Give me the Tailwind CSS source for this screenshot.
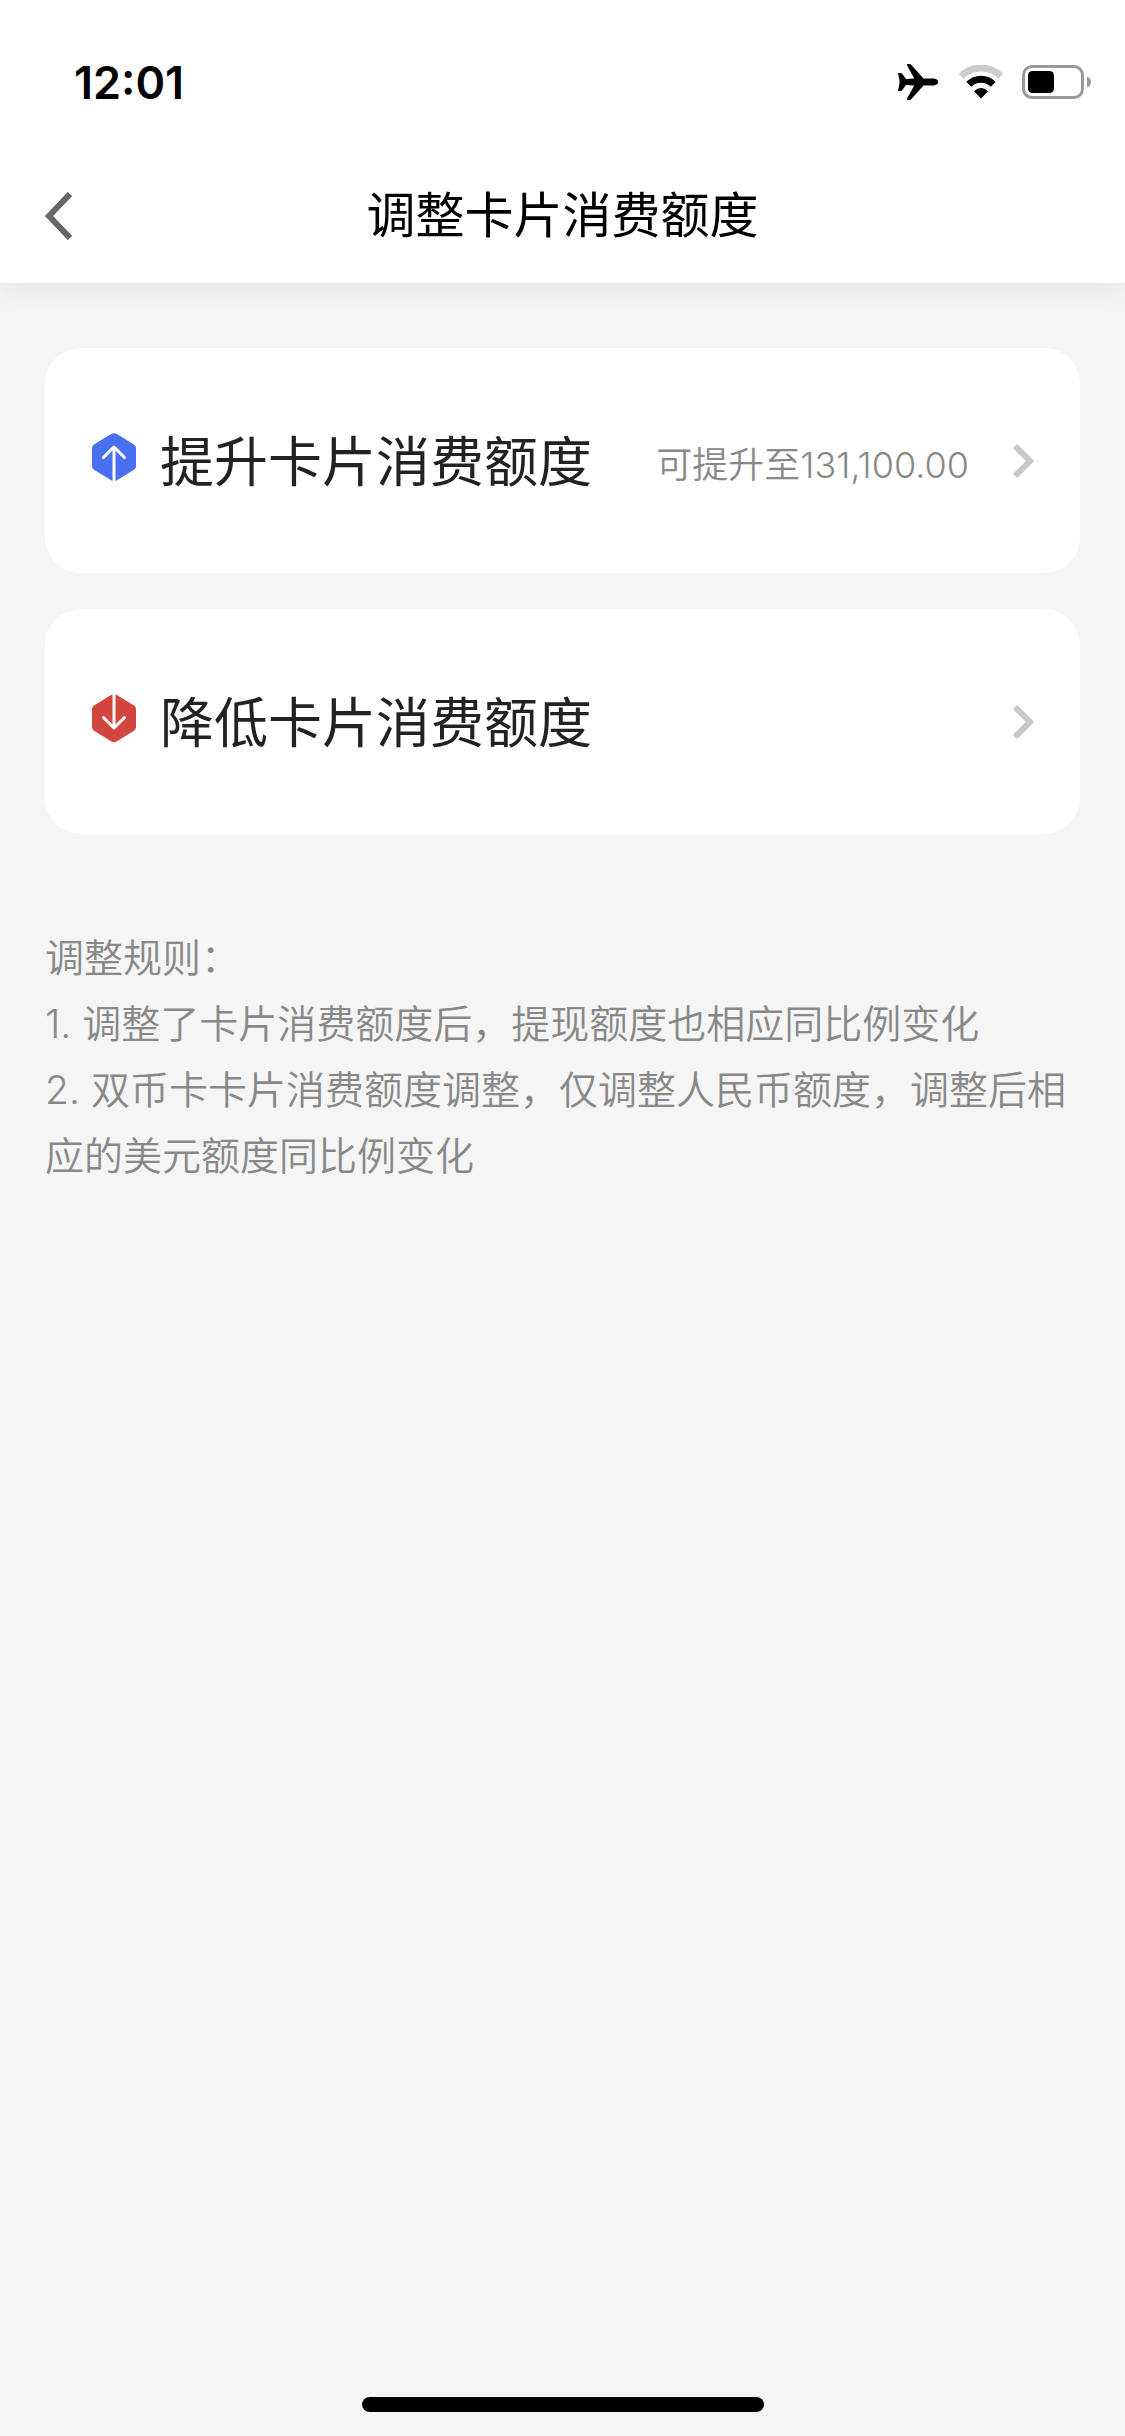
<!DOCTYPE html>
<html lang="zh-CN">
<head>
<meta charset="utf-8">
<meta name="viewport" content="width=device-width, initial-scale=1">
<title>调整卡片消费额度</title>
<script src="https://cdn.jsdelivr.net/npm/@tailwindcss/browser@4"></script>
</head>
<body class="flex min-h-screen flex-col bg-[#f5f5f5] font-['Inter','Noto_Sans_CJK_SC',sans-serif]">
  <header class="bg-white shadow-[0_6px_30px_rgba(0,0,0,0.07)]">
    <div class="flex h-[132px] items-center justify-between pt-8 pr-[34px] pl-[74px]">
      <time class="text-[45px] leading-none font-semibold text-black">12:01</time>
      <div class="flex items-center">
        <svg class="h-9 w-10" viewBox="0 0 40 36" fill="#000" aria-label="飞行模式">
          <path d="M0 9h2.500q1 0 1.600.8L8 15l8.200-.5L9 1.200Q8.500 0 9.800 0h1.700q1 0 1.700.8L25.500 14.500H36q4.300.8 4.300 3.500T36 21.500H25.500L13.200 35.200q-.7.8-1.700.8H9.800Q8.500 36 9 34.800L16.200 21.500 8 21 4.100 26.200q-.6.8-1.600.8H0l1.500-7.800v-2.400z"/>
        </svg>
        <svg class="ml-5 h-[34px] w-[46px]" viewBox="0 0 46 34" fill="none" aria-label="无线网络">
          <path d="M3.200 11.200a28 28 0 0 1 39.600 0" stroke="#ccc" stroke-width="7"/>
          <path d="M10.800 19.300a17.200 17.200 0 0 1 24.400 0" stroke="#000" stroke-width="7"/>
          <path d="M16 26.200q7-6.300 14 0L23 33.500z" fill="#000"/>
        </svg>
        <svg class="ml-[18px] h-[34px] w-[69px]" viewBox="0 0 69 34" aria-label="电池">
          <rect x="1.500" y="1.500" width="59" height="31" rx="8.500" fill="none" stroke="#999" stroke-width="3"/>
          <rect x="6" y="6" width="26" height="22" rx="4.500" fill="#000"/>
          <path d="M65 11.500q4 1.500 4 5.500t-4 5.500z" fill="#999"/>
        </svg>
      </div>
    </div>
    <div class="grid h-[151px] grid-cols-[1fr_auto_1fr] items-center px-11 pt-4">
      <button type="button" class="justify-self-start" aria-label="返回">
        <svg class="h-12 w-7" viewBox="0 0 28 48" fill="none" stroke="#666" stroke-width="6"><path d="M26 2 5 24l21 22"/></svg>
      </button>
      <h1 class="text-[49px] leading-[72px] font-normal text-black">调整卡片消费额度</h1>
    </div>
  </header>

  <main class="flex flex-1 flex-col px-[45px] pt-[65px]">
    <nav class="flex flex-col gap-9">
      <a href="#raise" class="flex h-[225px] items-center rounded-[36px] bg-white pr-[46px] pl-[47px]">
        <svg class="mb-2 h-12 w-11" viewBox="0 0 44 48" fill="none">
          <path d="M19.500.8q2.500-1.300 5 0L42 11.500q2 1.300 2 3.700v18q0 2.300-2 3.500L24.500 47.400q-2.500 1.300-5 0L2 36.700Q0 35.500 0 33.200v-18q0-2.400 2-3.700z" fill="#4a6ff0"/>
          <path d="M22 15v33" stroke="#fff" stroke-width="3"/>
          <path d="M11.500 24.500 22 14l10.500 10.500" stroke="#fff" stroke-width="3" stroke-linecap="round" stroke-linejoin="round"/>
        </svg>
        <span class="mt-1 ml-6 text-[54px] leading-[80px] text-[#222]">提升卡片消费额度</span>
        <span class="mt-2 ml-auto text-[36px] leading-[52px] font-[350] text-[#888]">可提升至131,100.00</span>
        <svg class="ml-11 h-[34px] w-[21px]" viewBox="0 0 21 34" fill="none" stroke="#c7c7cc" stroke-width="6"><path d="M2 2l15 15L2 32"/></svg>
      </a>
      <a href="#lower" class="flex h-[225px] items-center rounded-[36px] bg-white pr-[46px] pl-[47px]">
        <svg class="mb-2 h-12 w-11" viewBox="0 0 44 48" fill="none">
          <path d="M19.500.8q2.500-1.300 5 0L42 11.500q2 1.300 2 3.700v18q0 2.300-2 3.500L24.500 47.400q-2.500 1.300-5 0L2 36.700Q0 35.500 0 33.200v-18q0-2.400 2-3.700z" fill="#d3463e"/>
          <path d="M22 0v33" stroke="#fff" stroke-width="3"/>
          <path d="M11.500 23.500 22 34l10.500-10.500" stroke="#fff" stroke-width="3" stroke-linecap="round" stroke-linejoin="round"/>
        </svg>
        <span class="mt-1 ml-6 text-[54px] leading-[80px] text-[#222]">降低卡片消费额度</span>
        <svg class="ml-auto h-[34px] w-[21px]" viewBox="0 0 21 34" fill="none" stroke="#c7c7cc" stroke-width="6"><path d="M2 2l15 15L2 32"/></svg>
      </a>
    </nav>
    <section class="mt-[91px] text-[39px] leading-[66px] font-[350] text-[#888]">
      <h2 class="font-[350]">调整规则：</h2>
      <p>1. 调整了卡片消费额度后，提现额度也相应同比例变化</p>
      <p>2. 双币卡卡片消费额度调整，仅调整人民币额度，调整后相应的美元额度同比例变化</p>
    </section>
  </main>

  <footer class="flex justify-center pb-6">
    <div class="h-[15px] w-[402px] rounded-full bg-black"></div>
  </footer>
</body>
</html>
